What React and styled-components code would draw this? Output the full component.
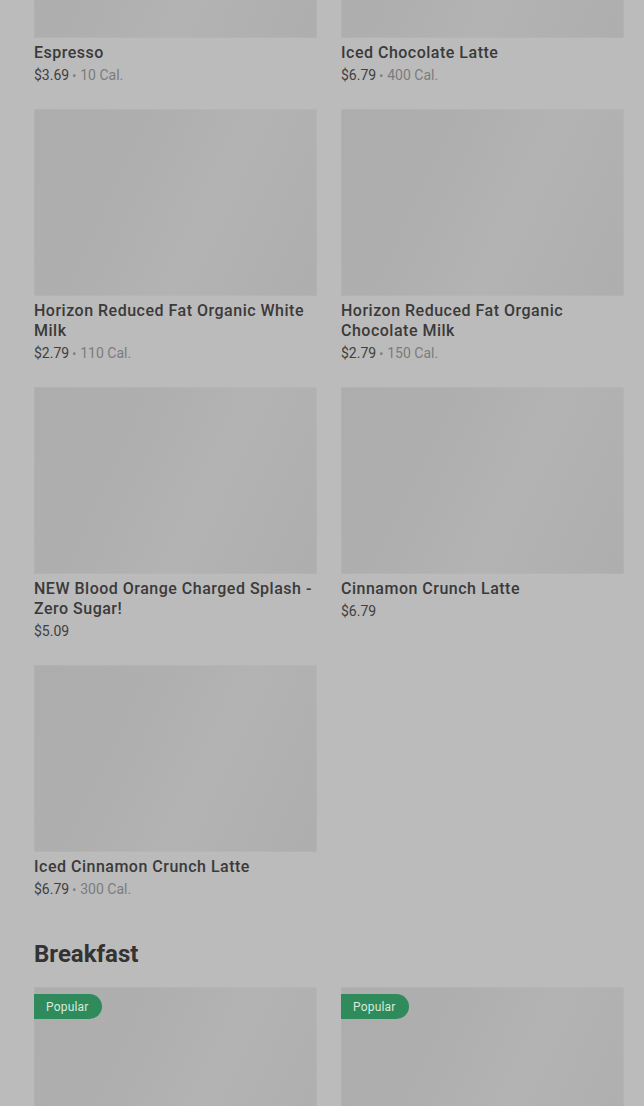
import React from 'react';
import styled, { createGlobalStyle } from 'styled-components';

const GlobalStyle = createGlobalStyle`
  html, body {
    margin: 0;
    padding: 0;
    background: #bbbbbb;
    overflow: hidden;
  }
  body {
    font-family: Roboto, "Liberation Sans", sans-serif;
    color: #333333;
  }
`;

const drinks = [
  { name: 'Espresso', price: '$3.69', cal: '10 Cal.' },
  { name: 'Iced Chocolate Latte', price: '$6.79', cal: '400 Cal.' },
  { name: 'Horizon Reduced Fat Organic White Milk', price: '$2.79', cal: '110 Cal.' },
  { name: 'Horizon Reduced Fat Organic Chocolate Milk', price: '$2.79', cal: '150 Cal.' },
  { name: 'NEW Blood Orange Charged Splash - Zero Sugar!', price: '$5.09' },
  { name: 'Cinnamon Crunch Latte', price: '$6.79' },
  { name: 'Iced Cinnamon Crunch Latte', price: '$6.79', cal: '300 Cal.' },
];

// only the pictures of the breakfast row are in view
const breakfast = [{ id: 'b1', popular: true }, { id: 'b2', popular: true }];

export default function App() {
  return (
    <>
      <GlobalStyle />
      <Page>
        <Grid>
          {drinks.map((item) => (
            <Item key={item.name} {...item} />
          ))}
        </Grid>
        <Section>
          <Heading>Breakfast</Heading>
          <Grid>
            {breakfast.map((item) => (
              <Card key={item.id}>
                <Photo>{item.popular && <Badge>Popular</Badge>}</Photo>
              </Card>
            ))}
          </Grid>
        </Section>
      </Page>
    </>
  );
}

function Item({ name, price, cal, popular }) {
  return (
    <Card>
      <Photo>{popular && <Badge>Popular</Badge>}</Photo>
      <Title>{name}</Title>
      <Meta>
        {price}
        {cal && (
          <Cal>
            <Dot>•</Dot>
            {cal}
          </Cal>
        )}
      </Meta>
    </Card>
  );
}

// page is scrolled: first row of pictures is cut at the top
const Page = styled.div`
  margin-top: -149px;
  padding: 0 20px 0 34px;
`;

const Grid = styled.div`
  display: grid;
  grid-template-columns: 283px 283px;
  column-gap: 24px;
  row-gap: 24px;
  align-items: start;
`;

const Card = styled.div`
  display: flex;
  flex-direction: column;
`;

const Photo = styled.div`
  position: relative;
  height: 187px;
  background: linear-gradient(115deg, #adadad 0%, #afafaf 35%, #b3b3b3 60%, #aeaeae 100%);
  box-shadow: inset 0 0 0 1px rgba(255, 255, 255, 0.05);
`;

const Badge = styled.span`
  position: absolute;
  top: 7px;
  left: 0;
  height: 25px;
  padding: 0 13px 0 12px;
  display: flex;
  align-items: center;
  background: #2f8a5c;
  color: #d6ebdd;
  font-size: 12px;
  letter-spacing: 0.2px;
  border-radius: 0 13px 13px 0;
`;

const Title = styled.div`
  margin-top: 5px;
  font-size: 16px;
  font-weight: 500;
  line-height: 20px;
  letter-spacing: 0.5px;
  color: #3a3a3a;
`;

const Meta = styled.div`
  margin-top: 2px;
  height: 20px;
  font-size: 14px;
  line-height: 20px;
  color: #404040;
  white-space: nowrap;
`;

const Cal = styled.span`
  color: #7c7c7c;
`;

const Dot = styled.span`
  margin: 0 4px 0 3px;
  font-size: 12px;
  line-height: 0;
`;

const Section = styled.div`
  margin-top: 39px;
`;

const Heading = styled.h2`
  margin: 0 0 17px;
  font-size: 24px;
  line-height: 32px;
  font-weight: 700;
  color: #333333;
`;
